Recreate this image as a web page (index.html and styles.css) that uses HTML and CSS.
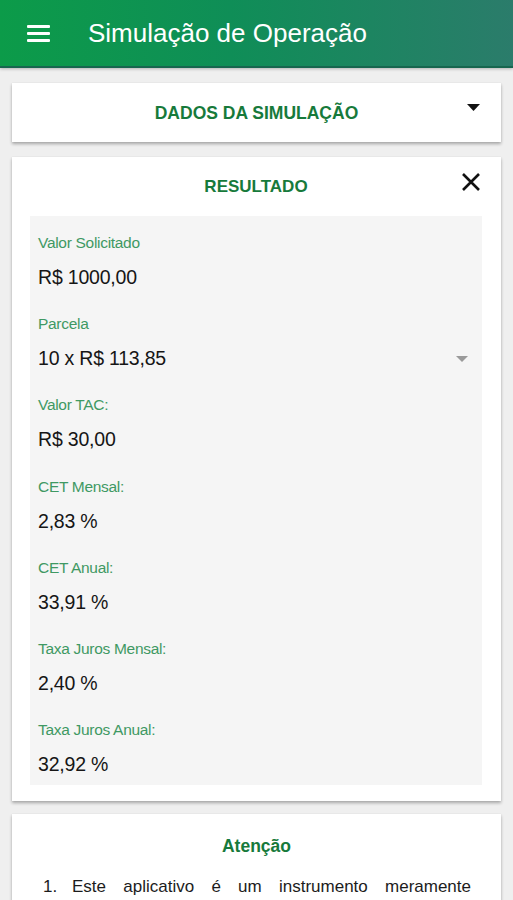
FILE: index.html
```html
<!DOCTYPE html>
<html lang="pt-BR">
<head>
<meta charset="utf-8">
<title>Simulação de Operação</title>
<link rel="stylesheet" href="styles.css">
</head>
<body>
<header class="appbar">
  <svg class="menu" width="23" height="17" viewBox="0 0 23 17"><rect x="0" y="0" width="23" height="3" rx="1"/><rect x="0" y="7" width="23" height="3" rx="1"/><rect x="0" y="14" width="23" height="3" rx="1"/></svg>
  <h1 class="appbar-title">Simulação de Operação</h1>
</header>

<section class="card card-collapsed">
  <h2 class="card-title">DADOS DA SIMULAÇÃO</h2>
  <svg class="caret" width="13" height="7" viewBox="0 0 13 7"><path d="M0 0H13L6.5 7Z"/></svg>
</section>

<section class="card card-result">
  <div class="card-head">
    <h2 class="card-title">RESULTADO</h2>
    <svg class="close" width="20" height="20" viewBox="0 0 20 20"><path d="M2 2L18 18M18 2L2 18"/></svg>
  </div>
  <div class="fields">
    <div class="field"><span class="label">Valor Solicitado</span><span class="value">R$ 1000,00</span></div>
    <div class="field"><span class="label">Parcela</span>
      <div class="value-row"><span class="value">10 x R$ 113,85</span><svg class="select-caret" width="12" height="6" viewBox="0 0 12 6"><path d="M0 0H12L6 6Z"/></svg></div>
    </div>
    <div class="field"><span class="label">Valor TAC:</span><span class="value">R$ 30,00</span></div>
    <div class="field"><span class="label">CET Mensal:</span><span class="value">2,83 %</span></div>
    <div class="field"><span class="label">CET Anual:</span><span class="value">33,91 %</span></div>
    <div class="field"><span class="label">Taxa Juros Mensal:</span><span class="value">2,40 %</span></div>
    <div class="field"><span class="label">Taxa Juros Anual:</span><span class="value">32,92 %</span></div>
  </div>
</section>

<section class="card card-notice">
  <h2 class="notice-title">Atenção</h2>
  <div class="notice-item">
    <span class="num">1.</span>
    <p class="notice-text">Este aplicativo é um instrumento meramente ilustrativo, os valores apresentados são aproximados e podem sofrer alterações no momento da contratação.</p>
  </div>
</section>
</body>
</html>
```

FILE: styles.css
```css
* { box-sizing: border-box; }
html, body { margin: 0; padding: 0; }
body {
  background: #efefef;
  font-family: "Liberation Sans", Arial, sans-serif;
  width: 513px;
  height: 900px;
  overflow: hidden;
}
.appbar {
  height: 68px;
  display: flex;
  align-items: center;
  padding-left: 27px;
  background: linear-gradient(90deg, #0c9b49 0%, #0f8e57 45%, #2b7c6b 100%);
  border-bottom: 2px solid #17664f;
  box-shadow: 0 1px 3px rgba(0,0,0,0.25);
}
.menu { fill: #ffffff; flex: none; margin-top: 1px; }
.appbar-title {
  margin: 0 0 0 38px;
  color: #ffffff;
  font-size: 26px;
  font-weight: normal;
  letter-spacing: 0;
}
.card {
  background: #ffffff;
  margin: 15px 12px 0;
  box-shadow: 0 2px 3px rgba(0,0,0,0.3), 0 0 1px rgba(0,0,0,0.08);
}
.card-title {
  margin: 0;
  color: #177a3b;
  font-size: 17.5px;
  font-weight: bold;
  text-align: center;
  line-height: 20px;
}
.card-collapsed {
  height: 59px;
  position: relative;
  display: flex;
  align-items: center;
  justify-content: center;
  padding-top: 1px;
}
.caret {
  position: absolute;
  right: 21px;
  top: 21px;
  fill: #111;
}
.card-result { padding: 0 19px 16px 18px; }
.card-head {
  height: 59px;
  position: relative;
  display: flex;
  align-items: center;
  justify-content: center;
}
.card-head .card-title { font-size: 17px; }
.close {
  position: absolute;
  right: 1px;
  top: 15px;
  stroke: #111;
  stroke-width: 2.6;
  fill: none;
}
.fields {
  background: #f5f5f5;
  padding: 18px 14px 9px 8px;
  display: flex;
  flex-direction: column;
  gap: 26.2px;
}
.field { display: flex; flex-direction: column; gap: 13px; }
.label {
  color: #3f9963;
  font-size: 15.5px;
  line-height: 18px;
  letter-spacing: -0.3px;
}
.value {
  color: #161616;
  font-size: 19.5px;
  line-height: 24px;
  letter-spacing: -0.2px;
}
.value-row { display: flex; align-items: center; justify-content: space-between; }
.select-caret { fill: #9a9a9a; margin-top: 2px; }
.card-notice { margin-top: 13px; padding: 22px 30px 20px 30px; }
.notice-title {
  margin: 0;
  color: #177a3b;
  font-size: 17.5px;
  font-weight: bold;
  text-align: center;
  line-height: 20px;
}
.notice-item {
  display: flex;
  margin-top: 19px;
  color: #1c1c1c;
  font-size: 17px;
  line-height: 24px;
}
.num { flex: none; width: 30px; padding-left: 1px; }
.notice-text { margin: 0; text-align: justify; }
```
